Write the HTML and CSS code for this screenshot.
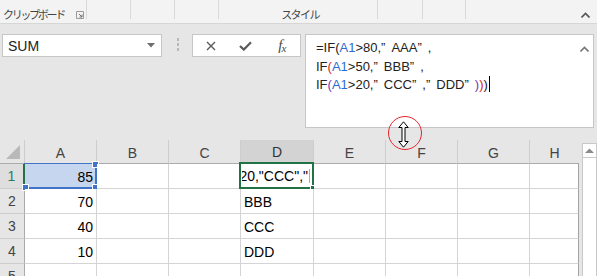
FILE: index.html
```html
<!DOCTYPE html>
<html lang="ja">
<head>
  <meta charset="UTF-8" />
  <title>IF関数のネスト</title>
  <link rel="stylesheet" href="styles.css">
</head>
<body>
  <div class="ribbon">
    <div class="group clip">
      <span class="glabel">クリップボード</span>
      <svg class="launcher" width="8" height="8" viewBox="0 0 8 8"><path d="M0.5 0.5H7.5V7.5H0.5Z" fill="none" stroke="#9a9a9a"/><path d="M3 3L6 6M6 3.5V6H3.5" fill="none" stroke="#707070"/></svg>
    </div>
    <div class="group w44"></div>
    <div class="group w44"></div>
    <div class="group w44"></div>
    <div class="group style"><span class="glabel">スタイル</span></div>
    <div class="group w45"></div>
    <div class="group w43"></div>
    <div class="group rest">
      <svg class="caret" width="9" height="6" viewBox="0 0 9 6"><path d="M0.5 5.5L4.5 1.5L8.5 5.5" fill="none" stroke="#555" stroke-width="1.6"/></svg>
    </div>
  </div>

  <div class="fbar">
    <div class="namebox">
      <span>SUM</span>
      <svg width="8" height="5" viewBox="0 0 8 5"><path d="M0 0H8L4 4.5Z" fill="#6e6e6e"/></svg>
    </div>
    <div class="grip"><i></i><i></i><i></i></div>
    <div class="fbtns">
      <span class="fbtn"><svg width="10" height="10" viewBox="0 0 10 10"><path d="M1 1L9 9M9 1L1 9" stroke="#5a5a5a" stroke-width="1.4"/></svg></span>
      <span class="fbtn"><svg width="13" height="10" viewBox="0 0 13 10"><path d="M1 5L4.8 8.6L12 1.2" fill="none" stroke="#5a5a5a" stroke-width="2.2"/></svg></span>
      <span class="fbtn fx"><i>f</i><i class="sub">x</i></span>
    </div>
    <div class="fbox">
      <div class="ftext">
        <div>=IF(<span class="ref">A1</span>&gt;80,<span class="q">”</span>AAA<span class="q">”</span>,</div>
        <div>IF<span class="red">(</span><span class="ref">A1</span>&gt;50,<span class="q">”</span>BBB<span class="q">”</span>,</div>
        <div>IF<span class="pur">(</span><span class="ref">A1</span>&gt;20,<span class="q">”</span>CCC<span class="q">”</span>,<span class="q">”</span>DDD<span class="q">”</span><span class="pur">)</span><span class="red">)</span>)<span class="cursor"></span></div>
      </div>
      <svg class="caret" width="9" height="6" viewBox="0 0 9 6"><path d="M0.5 5.5L4.5 1.5L8.5 5.5" fill="none" stroke="#777" stroke-width="1.6"/></svg>
    </div>
  </div>

  <div class="sheet">
    <div class="grid">
      <div class="h corner"><svg width="16" height="16" viewBox="0 0 16 16"><path d="M15 1V15H1Z" fill="#b9b9b9"/></svg></div>
      <div class="h col">A</div>
      <div class="h col">B</div>
      <div class="h col">C</div>
      <div class="h col cur">D</div>
      <div class="h col">E</div>
      <div class="h col">F</div>
      <div class="h col">G</div>
      <div class="h col last">H</div>

      <div class="h row cur">1</div>
      <div class="c num sel">85<span class="range"><b class="tr"></b><b class="br"></b><b class="bl"></b></span></div>
      <div class="c"></div>
      <div class="c"></div>
      <div class="c active"><span class="clip-text">IF(A1&gt;20,"CCC","</span><span class="tcur"></span><b class="handle"></b></div>
      <div class="c"></div>
      <div class="c"></div>
      <div class="c"></div>
      <div class="c last"></div>

      <div class="h row">2</div>
      <div class="c num">70</div>
      <div class="c"></div>
      <div class="c"></div>
      <div class="c">BBB</div>
      <div class="c"></div>
      <div class="c"></div>
      <div class="c"></div>
      <div class="c last"></div>

      <div class="h row">3</div>
      <div class="c num">40</div>
      <div class="c"></div>
      <div class="c"></div>
      <div class="c">CCC</div>
      <div class="c"></div>
      <div class="c"></div>
      <div class="c"></div>
      <div class="c last"></div>

      <div class="h row">4</div>
      <div class="c num">10</div>
      <div class="c"></div>
      <div class="c"></div>
      <div class="c">DDD</div>
      <div class="c"></div>
      <div class="c"></div>
      <div class="c"></div>
      <div class="c last"></div>

      <div class="h row">5</div>
      <div class="c"></div>
      <div class="c"></div>
      <div class="c"></div>
      <div class="c"></div>
      <div class="c"></div>
      <div class="c"></div>
      <div class="c"></div>
      <div class="c last"></div>
    </div>
    <div class="vscroll">
      <div class="sbtn"><svg width="9" height="5" viewBox="0 0 9 5"><path d="M0 5L4.5 0.5L9 5Z" fill="#8a8a8a"/></svg></div>
      <div class="track"></div>
    </div>
  </div>

  <div class="marker"></div>
  <svg class="resize-cursor" width="11" height="27" viewBox="0 0 11 27"><path d="M5.5 0.8L10.2 6.5H7V20.5H10.2L5.5 26.2L0.8 20.5H4V6.5H0.8Z" fill="#fff" stroke="#000" stroke-width="1"/></svg>
</body>
</html>
```

FILE: styles.css
```css
:root {
  --ribbon: #f3f3f3;
  --chrome: #e6e6e6;
  --line: #d4d4d4;
  --head-line: #ababab;
  --green: #217346;
  --blue: #3f74c8;
}

body {
  margin: 0;
  width: 597px;
  height: 276px;
  overflow: hidden;
  position: relative;
  background: var(--chrome);
  font-family: 'Liberation Sans', Arial, sans-serif;
  color: #222;
}

/* ribbon strip */
.ribbon {
  display: flex;
  align-items: flex-start;
  height: 23px;
  background: var(--ribbon);
  border-bottom: 1px solid #d6d6d6;
}

.group {
  box-sizing: border-box;
  height: 19px;
  border-right: 1px solid #d9d9d9;
  padding-top: 8px;
  display: flex;
  align-items: flex-start;
}

.clip { width: 87px; padding-left: 3px; }
.w44 { width: 44px; }
.w45 { width: 45px; }
.w43 { width: 43px; }
.style { width: 159px; justify-content: center; padding-left: 4px; }
.rest { flex: 1; border-right: none; justify-content: flex-end; padding: 12px 7px 0 0; }

.glabel {
  font-family: 'Noto Sans CJK JP', sans-serif;
  font-size: 11px;
  line-height: 13px;
  letter-spacing: -2.3px;
  color: #444;
  white-space: nowrap;
}

.style .glabel { letter-spacing: -1.6px; }

.launcher { margin: 3px 0 0 12px; }

/* formula bar */
.fbar {
  display: flex;
  align-items: flex-start;
  height: 116px;
  box-sizing: border-box;
  padding-top: 10px;
}

.namebox {
  box-sizing: border-box;
  width: 160px;
  height: 23px;
  margin-left: 2px;
  background: #fff;
  border: 1px solid #c6c6c6;
  display: flex;
  align-items: center;
  justify-content: space-between;
  padding: 0 6px 0 5px;
  font-size: 14px;
  color: #222;
}

.grip {
  width: 3px;
  margin: 4px 0 0 15px;
  display: flex;
  flex-direction: column;
  gap: 2px;
}

.grip i {
  width: 2px;
  height: 3px;
  background: #b8b8b8;
}

.fbtns {
  box-sizing: border-box;
  width: 109px;
  height: 23px;
  margin-left: 12px;
  background: #fff;
  border: 1px solid #c6c6c6;
  display: flex;
  align-items: center;
}

.fbtn {
  width: 36px;
  display: flex;
  justify-content: center;
  align-items: center;
}

.fx {
  font-family: 'Liberation Serif', serif;
  color: #4a4a4a;
  font-size: 15px;
  padding-left: 1px;
}

.fx .sub { font-size: 11px; margin-top: 4px; margin-left: -1px; }

.fbox {
  box-sizing: border-box;
  width: 289px;
  height: 94px;
  margin-left: 4px;
  background: #fff;
  border: 1px solid #c6c6c6;
  display: flex;
  align-items: flex-start;
  padding: 4px 4px 0 10px;
}

.ftext {
  flex: 1;
  font-size: 13px;
  line-height: 18.5px;
  color: #222;
  white-space: nowrap;
}

.fbox .caret { margin-top: 7px; }

.ref { color: #2e6bd0; }
.red { color: #e02424; }
.pur { color: #7a36b0; }
.q { letter-spacing: 6px; }

.cursor {
  display: inline-block;
  width: 1px;
  height: 16px;
  margin-left: 1px;
  background: #000;
  vertical-align: -3px;
}

/* sheet */
.sheet {
  display: flex;
  align-items: flex-start;
}

.grid {
  display: grid;
  grid-template-columns: 25px 72px 72px 72px 73px 72px 72px 72px 49px;
  grid-template-rows: 24px repeat(5, 25px);
}

.h {
  box-sizing: border-box;
  background: var(--chrome);
  color: #444;
  font-size: 14px;
  display: flex;
  align-items: center;
  justify-content: center;
}

.col {
  border-right: 1px solid #cdcdcd;
  border-bottom: 1px solid var(--head-line);
  padding-top: 2px;
}

.col.last { border-right: none; }
.col.cur { background: #d3d3d3; border-bottom: 2px solid var(--green); color: #333; }

.corner {
  border-right: 1px solid #cdcdcd;
  border-bottom: 1px solid var(--head-line);
  justify-content: flex-end;
  align-items: flex-end;
  padding: 0 3px 3px 0;
}

.row {
  border-right: 1px solid var(--head-line);
  border-bottom: 1px solid #cdcdcd;
}

.row.cur { background: #dedede; color: #2a7a6c; border-right: 2px solid var(--green); }

.c {
  box-sizing: border-box;
  position: relative;
  background: #fff;
  border-right: 1px solid var(--line);
  border-bottom: 1px solid var(--line);
  display: flex;
  align-items: center;
  padding: 1px 3px 0;
  font-size: 14px;
  color: #000;
  white-space: nowrap;
}

.c.last { border-right: 1px solid #a3a3a3; }
.num { justify-content: flex-end; }
.sel { background: #c6d6ee; }

.range {
  position: absolute;
  left: -1px;
  top: -1px;
  right: -1px;
  bottom: -1px;
  border: 2px solid var(--blue);
  border-top-width: 1px;
  border-left: none;
}

.range b {
  position: absolute;
  width: 5px;
  height: 5px;
  background: var(--blue);
  border: 1px solid #fff;
}

.range .tr { right: -4px; top: -3px; }
.range .br { right: -4px; bottom: -4px; }
.range .bl { left: -2px; bottom: -4px; }

.active {
  padding: 0;
}

.active::before {
  content: "";
  position: absolute;
  left: -2px;
  top: -2px;
  right: -1px;
  bottom: -1px;
  border: 2px solid var(--green);
}

.clip-text {
  flex: 1;
  display: flex;
  justify-content: flex-end;
  overflow: hidden;
  margin-left: 1px;
}

.tcur {
  width: 1px;
  height: 14px;
  background: #e8a33d;
  margin: 0 3px 0 1px;
}

.handle {
  position: absolute;
  right: -4px;
  bottom: -4px;
  width: 5px;
  height: 5px;
  background: var(--green);
  border: 1px solid #fff;
}

.vscroll {
  margin: 3px 0 0 3px;
  width: 15px;
}

.sbtn {
  box-sizing: border-box;
  height: 15px;
  background: #fff;
  border: 1px solid #c9c9c9;
  display: flex;
  align-items: center;
  justify-content: center;
}

.track {
  height: 120px;
  background: #fff;
  border-left: 1px solid #c9c9c9;
  border-right: 1px solid #c9c9c9;
}

/* annotation over the sheet */
.marker {
  position: absolute;
  left: 388px;
  top: 116px;
  width: 32px;
  height: 32px;
  border: 1.5px solid #e8242c;
  border-radius: 50%;
}

.resize-cursor {
  position: absolute;
  left: 398px;
  top: 121px;
}
```
